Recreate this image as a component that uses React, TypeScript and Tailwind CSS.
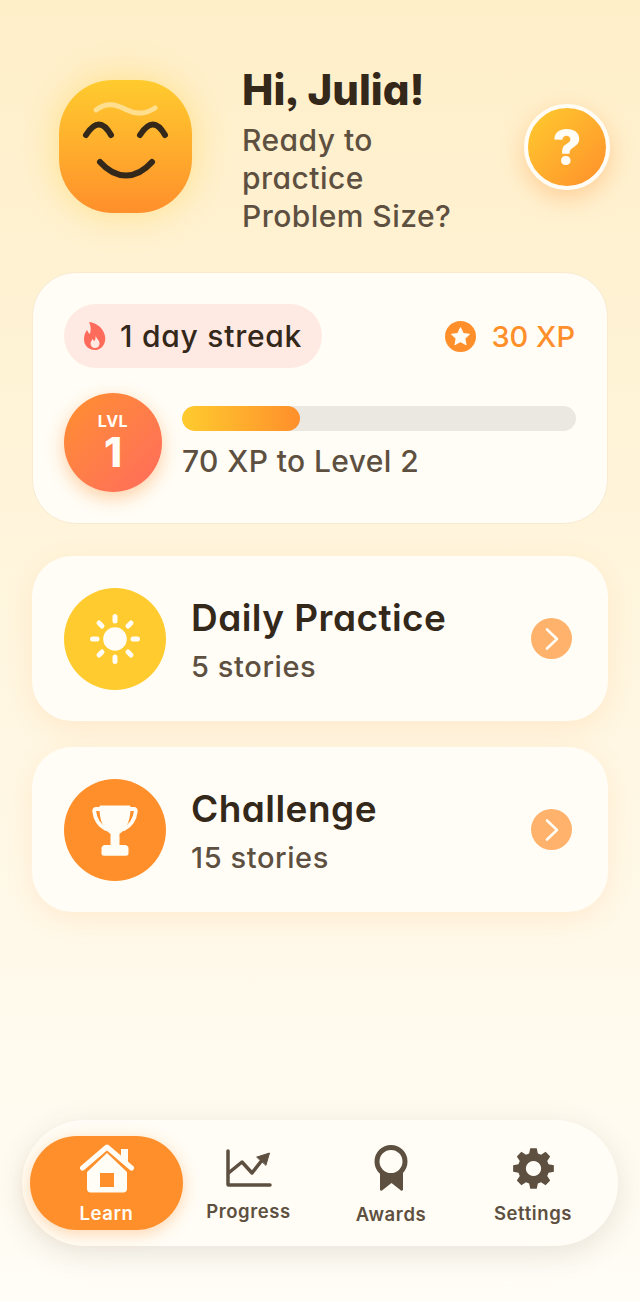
const ROUND_TEXT = "font-['Inter',sans-serif] [font-feature-settings:'cv11','ss03']";

function gearPath(teeth: number, outer: number, inner: number) {
  const points: string[] = [];
  const step = (Math.PI * 2) / teeth;
  for (let i = 0; i < teeth; i++) {
    const a = i * step - Math.PI / 2;
    const pairs: [number, number][] = [
      [inner, a - step * 0.36],
      [outer, a - step * 0.2],
      [outer, a + step * 0.2],
      [inner, a + step * 0.36],
    ];
    for (const [r, t] of pairs) {
      points.push(`${(24 + r * Math.cos(t)).toFixed(2)} ${(24 + r * Math.sin(t)).toFixed(2)}`);
    }
  }
  return `M${points.join("L")}Z`;
}

function Mascot() {
  return (
    <div className="flex h-[133px] w-[133px] shrink-0 items-center justify-center rounded-[54px] bg-gradient-to-b from-[#FFCB2E] to-[#FF8F2B] shadow-[0_0_36px_rgba(255,203,46,0.45)]">
      <svg viewBox="0 0 133 133" className="h-[133px] w-[133px]" fill="none" strokeLinecap="round">
        <path d="M37 30C48 21 58 25 68 30C78 35 87 34 96 28" stroke="#FFE6A6" strokeOpacity="0.8" strokeWidth="5" />
        <path d="M27 55C36 41 44 41 52 55M81 55C90 41 98 41 106 55" stroke="#33281A" strokeWidth="6" />
        <path d="M41 82C57 100 77 100 93 82" stroke="#33281A" strokeWidth="6" />
      </svg>
    </div>
  );
}

function FlameIcon() {
  return (
    <svg viewBox="0 0 22 28" className="h-[28px] w-[22px] shrink-0">
      <path d="M5 0C10 0.5 19 4 21 14C22.5 22 17 28 11 28C5 28 0 24 0 17C0 13 1.5 10 3 8C4 10 4.5 11 6 12C7 8 7 4 5 0Z" fill="#FF6B5B" />
      <path d="M11.5 13C12 17 16 18 15.5 22C15 25 13 26 11 26C8.5 26 6.5 24 6.5 21.5C6.5 19.5 8 18.5 8.5 17C9.5 18 10 19 10.5 19C11.5 17 12 15 11.5 13Z" fill="#FFE9E3" />
    </svg>
  );
}

function StarBadge() {
  return (
    <svg viewBox="0 0 30 30" className="h-[31px] w-[31px] shrink-0">
      <circle cx="15" cy="15" r="15" fill="#FF8F2B" />
      <path
        d="M15 6.5l2.6 5.5 6 .8-4.4 4.1 1.1 6L15 20l-5.3 2.9 1.1-6-4.4-4.1 6-.8z"
        fill="#FFFDF6"
        stroke="#FFFDF6"
        strokeWidth="1"
        strokeLinejoin="round"
      />
    </svg>
  );
}

function SunIcon() {
  return (
    <svg viewBox="0 0 52 52" className="h-[52px] w-[52px]" fill="none" stroke="#FFFDF6" strokeWidth="5" strokeLinecap="round">
      <circle cx="26" cy="26" r="11.8" fill="#FFFDF6" stroke="none" />
      <path d="M26 3.5V8M26 44V48.5M3.5 26H8M44 26H48.5M10 10L13 13M39 39L42 42M10 42L13 39M39 13L42 10" />
    </svg>
  );
}

function TrophyIcon() {
  return (
    <svg viewBox="0 0 46 52" className="h-[52px] w-[46px]" fill="#FFFDF6">
      <path d="M9 1.5H37C38 1.5 38.6 2.2 38.6 3.2C38.6 14 35.5 25 28 29.5C27 30.2 27.5 31 27.5 32V41H33C35 41 36.5 42.5 36.5 44.5V49.5C36.5 50.8 35.5 51.7 34.3 51.7H11.7C10.5 51.7 9.5 50.8 9.5 49.5V44.5C9.5 42.5 11 41 13 41H18.5V32C18.5 31 19 30.2 18 29.5C10.5 25 7.4 14 7.4 3.2C7.4 2.2 8 1.5 9 1.5Z" />
      <path
        d="M9 5H4C2.7 5 2 6 2.2 7.2C3 14 6 21 14 25M37 5H42C43.3 5 44 6 43.8 7.2C43 14 40 21 32 25"
        fill="none"
        stroke="#FFFDF6"
        strokeWidth="3.8"
        strokeLinecap="round"
      />
    </svg>
  );
}

function ChevronBadge() {
  return (
    <div className="flex h-[41px] w-[41px] shrink-0 items-center justify-center rounded-full bg-[#FFB26B]">
      <svg viewBox="0 0 16 24" className="h-[24px] w-[16px]" fill="none" stroke="#FFFDF6" strokeWidth="2.6" strokeLinecap="round" strokeLinejoin="round">
        <path d="M3 2.5L13 12L3 21.5" />
      </svg>
    </div>
  );
}

function PracticeCard({ icon, iconBg, title, subtitle }: { icon: React.ReactNode; iconBg: string; title: string; subtitle: string }) {
  return (
    <div className="flex h-[165px] items-center rounded-[40px] bg-[#FFFDF6] pl-8 pr-[36px] shadow-[0_8px_28px_rgba(255,143,43,0.12)]">
      <div className={`flex h-[102px] w-[102px] shrink-0 items-center justify-center rounded-full ${iconBg}`}>{icon}</div>
      <div className="ml-[25px] flex-1 pt-[4px]">
        <div className={`${ROUND_TEXT} text-[37px] leading-[44px] font-semibold tracking-[0.45px] text-[#33281A]`}>{title}</div>
        <div className={`${ROUND_TEXT} mt-[9px] text-[29px] leading-[36px] font-medium tracking-[0.6px] text-[#5E5040]`}>{subtitle}</div>
      </div>
      <ChevronBadge />
    </div>
  );
}

function NavItem({ icon, label, className }: { icon: React.ReactNode; label: string; className: string }) {
  return (
    <div className={`flex flex-col items-center font-['Inter',sans-serif] text-[18.5px] font-semibold tracking-[0.6px] ${className}`}>
      {icon}
      <span className="leading-[22px]">{label}</span>
    </div>
  );
}

export default function App() {
  return (
    <div className="flex h-[1301px] w-[640px] flex-col overflow-hidden bg-gradient-to-b from-[#FFEFC9] to-[#FFFDF6] px-8">
      <header className="flex items-start pt-[65px]">
        <div className="mt-[15px] ml-[27px]">
          <Mascot />
        </div>
        <div className="ml-[50px] flex-1">
          <h1 className={`${ROUND_TEXT} text-[42px] leading-[50px] font-extrabold text-[#33281A]`}>Hi, Julia!</h1>
          <p className={`${ROUND_TEXT} mt-[6px] w-[230px] text-[30px] leading-[38px] font-medium tracking-[0.45px] text-[#5E5040]`}>
            Ready to
            <br />
            practice
            <br />
            Problem Size?
          </p>
        </div>
        <div className="mt-[39px] -mr-[2px] flex h-[86px] w-[86px] shrink-0 items-center justify-center rounded-full border-[4px] border-[#FFFDF6] bg-gradient-to-br from-[#FFCB2E] to-[#FF8F2B] shadow-[0_8px_24px_rgba(255,143,43,0.35)]">
          <span className="font-['Inter',sans-serif] text-[50px] leading-none font-extrabold text-[#FFFDF6]">?</span>
        </div>
      </header>

      <section className="mt-[37px] h-[252px] rounded-[44px] border border-[#F8EBD2] bg-[#FFFDF6] px-[31px] pt-[31px]">
        <div className="flex items-center justify-between">
          <div className="flex h-16 w-[258px] items-center rounded-full bg-[#FFE9E3] pl-[20px]">
            <FlameIcon />
            <span className={`${ROUND_TEXT} ml-[14px] text-[30px] leading-none font-medium tracking-[0.75px] text-[#33281A]`}>1 day streak</span>
          </div>
          <div className="mr-px flex items-center gap-[15px]">
            <StarBadge />
            <span className={`${ROUND_TEXT} text-[29px] leading-none font-medium text-[#FF8F2B]`}>30 XP</span>
          </div>
        </div>
        <div className="mt-[25px] flex items-start">
          <div className="flex h-[99px] w-[98px] shrink-0 flex-col items-center justify-center rounded-full bg-gradient-to-br from-[#FF8F2B] to-[#FF6B5B] text-[#FFFDF6] shadow-[0_6px_18px_rgba(255,143,43,0.4)]">
            <span className="font-['Inter',sans-serif] text-[16px] leading-[18px] font-bold tracking-[0.5px]">LVL</span>
            <span className="font-['Inter',sans-serif] text-[41px] leading-[44px] font-extrabold">1</span>
          </div>
          <div className="ml-5 flex-1 pt-[13px]">
            <div className="h-[25px] w-[394px] overflow-hidden rounded-full bg-[#EBE8E2]">
              <div className="h-full w-[30%] rounded-full bg-gradient-to-r from-[#FFCB2E] to-[#FF8F2B]" />
            </div>
            <div className={`${ROUND_TEXT} mt-[12px] text-[30px] leading-[36px] font-medium tracking-[0.4px] text-[#5E5040]`}>70 XP to Level 2</div>
          </div>
        </div>
      </section>

      <div className="mt-[32px] flex flex-col gap-[26px]">
        <PracticeCard icon={<SunIcon />} iconBg="bg-[#FFCB2E]" title="Daily Practice" subtitle="5 stories" />
        <PracticeCard icon={<TrophyIcon />} iconBg="bg-[#FF8F2B]" title="Challenge" subtitle="15 stories" />
      </div>

      <nav className="mt-auto mb-[55px] -mx-[10px] flex h-[126px] items-center rounded-[63px] bg-[#FFFDF6] pl-2 shadow-[0_8px_30px_rgba(94,80,64,0.14)]">
        <NavItem
          className="h-[94px] w-[153px] justify-center rounded-[47px] bg-[#FF8F2B] text-[#FFFDF6] shadow-[0_4px_16px_rgba(255,143,43,0.35)]"
          label="Learn"
          icon={
            <svg viewBox="0 0 56 50" className="mb-[9px] h-[50px] w-[56px]">
              <path d="M28 10L8 29V46C8 48 9.5 49.5 11.5 49.5H44.5C46.5 49.5 48 48 48 46V29ZM21 30H35V44H21Z" fill="#FFFDF6" fillRule="evenodd" />
              <path d="M3.5 25L28 4L52.5 25" fill="none" stroke="#FFFDF6" strokeWidth="5" strokeLinecap="round" strokeLinejoin="round" />
              <path d="M42 6H49V19L42 13Z" fill="#FFFDF6" />
            </svg>
          }
        />
        <NavItem
          className="ml-[23px] w-[85px] pt-[5px] text-[#5E5040]"
          label="Progress"
          icon={
            <svg viewBox="0 0 46 38" className="mb-[13px] h-[38px] w-[46px]" fill="none" stroke="#5E5040" strokeWidth="3.5" strokeLinecap="round" strokeLinejoin="round">
              <path d="M2 2V35.5C2 35.8 2.2 36 2.5 36H44" />
              <path d="M2.5 24L16 13L26 24L37 10" />
              <path d="M31 8L43.5 4L40 16Z" fill="#5E5040" stroke="#5E5040" strokeWidth="1" />
            </svg>
          }
        />
        <NavItem
          className="ml-[65px] w-[70px] pt-[4px] text-[#5E5040]"
          label="Awards"
          icon={
            <svg viewBox="0 0 36 46" className="mb-[12px] h-[46px] w-[36px]">
              <path d="M7 26V44.5C7 45.5 8 46 9 45.5L18.5 38L28 45.5C29 46 30 45.5 30 44.5V26Z" fill="#5E5040" />
              <circle cx="18" cy="16.5" r="14" fill="#FFFDF6" stroke="#5E5040" strokeWidth="5" />
            </svg>
          }
        />
        <NavItem
          className="ml-[67px] w-[80px] pt-[5px] text-[#5E5040]"
          label="Settings"
          icon={
            <svg viewBox="0 0 48 48" className="mb-[12px] h-[43px] w-[43px]" fill="#5E5040">
              <path d={gearPath(8, 23, 17.5) + " M24 15.5a8.5 8.5 0 1 0 .01 0Z"} fillRule="evenodd" />
            </svg>
          }
        />
      </nav>
    </div>
  );
}
